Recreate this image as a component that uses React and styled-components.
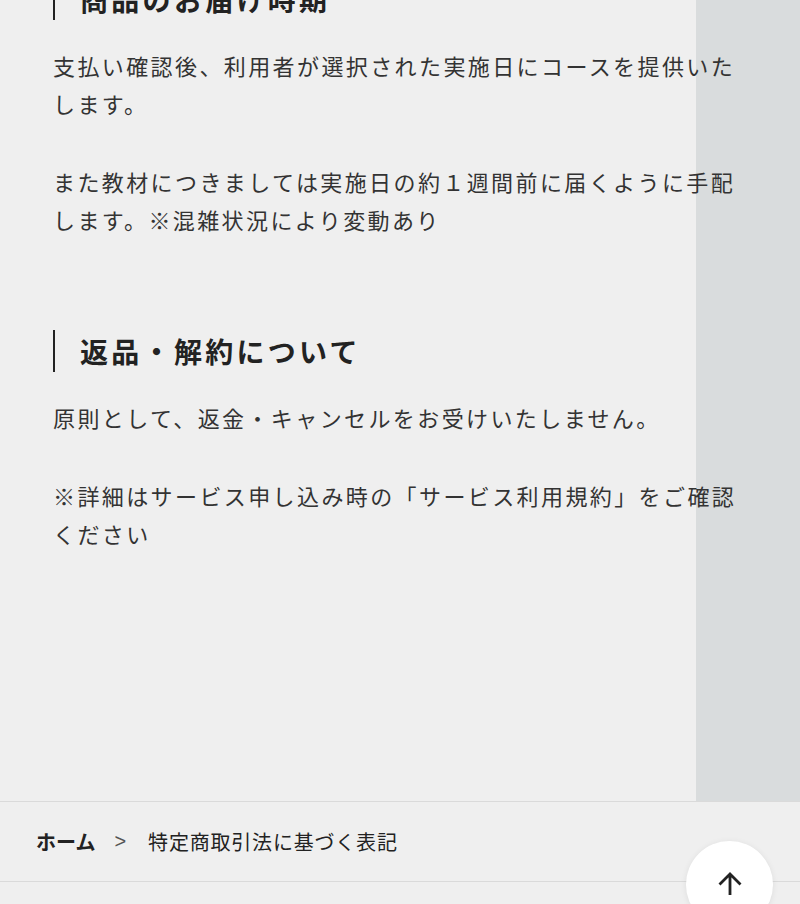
import React from "react";
import styled, { createGlobalStyle } from "styled-components";

const GlobalStyle = createGlobalStyle`
  html, body {
    margin: 0;
    padding: 0;
    background: #efefef;
  }
  body {
    font-family: "Noto Sans CJK JP", "Noto Sans", sans-serif;
    color: #333;
  }
`;

const Main = styled.main`
  background: linear-gradient(to right, #efefef 696px, #d9dcdd 696px);
  padding: 0 53px 249px;
`;

const Section = styled.section`
  margin-top: ${(props) => (props.first ? "-22px" : "92px")};
`;

const Heading = styled.h2`
  margin: 0 0 26px;
  border-left: 2px solid #222;
  padding-left: 25px;
  font-size: 28px;
  line-height: 42px;
  font-weight: 700;
  letter-spacing: 3.3px;
  color: #222;
`;

const Text = styled.p`
  margin: 0 0 ${(props) => (props.last ? "0" : "40px")};
  font-size: 22px;
  line-height: 38px;
  letter-spacing: 2.4px;
  color: #333;
`;

const Footer = styled.footer`
  border-top: 1px solid #dadada;
  border-bottom: 1px solid #dadada;
  background: #efefef;
`;

const Breadcrumb = styled.nav`
  display: flex;
  align-items: center;
  height: 79px;
  padding-left: 36px;
  font-size: 20px;
  color: #222;
`;

const Crumb = styled.span`
  font-weight: ${(props) => (props.bold ? 700 : 400)};
  letter-spacing: ${(props) => (props.bold ? "0" : "0.04em")};
`;

const Sep = styled.span`
  margin: 0 22px 0 19px;
  color: #555;
  font-family: "Liberation Sans", sans-serif;
  font-size: 20px;
`;

const TopButton = styled.button`
  position: fixed;
  right: 27px;
  bottom: -24px;
  width: 87px;
  height: 87px;
  border: none;
  border-radius: 50%;
  background: #fff;
  box-shadow: 0 1px 6px rgba(0, 0, 0, 0.08);
  display: flex;
  align-items: flex-start;
  justify-content: center;
  padding-top: 30px;
  cursor: pointer;
`;

function ArrowUp() {
  return (
    <svg width="26" height="26" viewBox="0 0 26 26" fill="none">
      <path
        d="M13 24V3M2.5 13.5 13 3l10.5 10.5"
        stroke="#222"
        strokeWidth="2.8"
        strokeLinecap="butt"
        strokeLinejoin="miter"
      />
    </svg>
  );
}

export default function App() {
  return (
    <>
      <GlobalStyle />
      <Main>
        <Section first>
          <Heading>商品のお届け時期</Heading>
          <Text>支払い確認後、利用者が選択された実施日にコースを提供いたします。</Text>
          <Text last>
            また教材につきましては実施日の約１週間前に届くように手配します。※混雑状況により変動あり
          </Text>
        </Section>
        <Section>
          <Heading>返品・解約について</Heading>
          <Text>原則として、返金・キャンセルをお受けいたしません。</Text>
          <Text last>
            ※詳細はサービス申し込み時の「サービス利用規約」をご確認ください
          </Text>
        </Section>
      </Main>
      <Footer>
        <Breadcrumb>
          <Crumb bold>ホーム</Crumb>
          <Sep>&gt;</Sep>
          <Crumb>特定商取引法に基づく表記</Crumb>
        </Breadcrumb>
      </Footer>
      <TopButton aria-label="ページトップへ">
        <ArrowUp />
      </TopButton>
    </>
  );
}
